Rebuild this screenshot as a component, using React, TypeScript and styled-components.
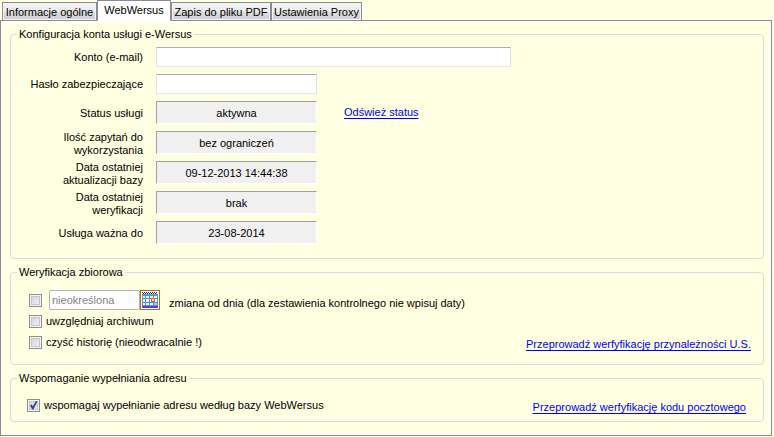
import React, { useState } from "react";
import styled, { createGlobalStyle } from "styled-components";

const GlobalStyle = createGlobalStyle`
  * { box-sizing: border-box; }
  body {
    margin: 0;
    background: #ffffe1;
    color: #000;
    font: 11px/13px "Liberation Sans", Arial, sans-serif;
  }
  button, input { font: inherit; }
`;

const Page = styled.main`
  padding-right: 2px;
`;

const TabBar = styled.div`
  display: flex;
  align-items: flex-end;
  height: 21px;
  padding-left: 2px;
`;

const Tab = styled.button<{ $active: boolean; $width: number }>`
  position: relative;
  z-index: ${(p) => (p.$active ? 1 : 0)};
  width: ${(p) => p.$width}px;
  height: ${(p) => (p.$active ? 21 : 19)}px;
  padding: ${(p) => (p.$active ? 0 : 2)}px 0 0;
  border: 1px solid #898c95;
  border-bottom-color: ${(p) => (p.$active ? "#fff" : "#898c95")};
  background: ${(p) =>
    p.$active ? "#fff" : "linear-gradient(#f3f3f3 0%, #ebebeb 50%, #dddddd 51%, #cfcfcf 100%)"};
  box-shadow: ${(p) => (p.$active ? "none" : "inset 0 0 0 1px #f4f4f4")};
  color: #000;
  white-space: nowrap;
`;

const Panel = styled.section`
  display: flex;
  flex-direction: column;
  gap: 7px;
  margin-top: -1px;
  padding: 7px 7px 13px 9px;
  border: 1px solid #898c95;
  box-shadow: inset 0 0 0 2px #fffff3;
`;

const Group = styled.fieldset<{ $compact?: boolean }>`
  min-width: 0;
  margin: 0;
  padding: 0 12px ${(p) => (p.$compact ? 7 : 12)}px 16px;
  border: 1px solid #d0dcea;
  border-radius: 4px;
`;

const Legend = styled.legend`
  margin-left: -10px;
  padding: 0 2px;
`;

const AccountGrid = styled.div`
  display: grid;
  grid-template-columns: 116px minmax(0, 1fr);
  grid-template-rows: 20px 20px;
  grid-auto-rows: 23px;
  gap: 7px 13px;
  align-items: center;
  padding: 6px 0 2px;
`;

const FieldLabel = styled.label`
  text-align: right;
`;

const ValueLabel = styled(FieldLabel)`
  padding-top: 2px;
`;

const FieldLine = styled.div`
  display: flex;
  align-items: center;
  gap: 27px;
`;

const TextInput = styled.input<{ $width: number }>`
  width: ${(p) => p.$width}px;
  height: 20px;
  padding: 0 4px;
  border: 1px solid;
  border-color: #abadb3 #dbdfe6 #e3e9ef #e2e3ea;
  border-radius: 1px;
  background: #fff;
  outline: none;
`;

const Value = styled.output`
  width: 161px;
  height: 23px;
  border: 1px solid;
  border-color: #a0a0a0 #fff #fff #a0a0a0;
  background: #f0f0f0;
  line-height: 22px;
  text-align: center;
`;

const Link = styled.a`
  color: #0000ff;
  text-decoration: underline;
  text-underline-offset: 2px;
  text-decoration-skip-ink: none;
  white-space: nowrap;
`;

const OptionList = styled.div`
  display: flex;
  flex-direction: column;
  gap: 1px;
  padding: 11px 0 0 2px;
`;

const OptionRow = styled.div`
  display: flex;
  align-items: center;
  min-height: 20px;
`;

const AddressRow = styled(OptionRow)`
  padding: 12px 5px 0 0;
`;

const TrailingLink = styled(Link)`
  margin-left: auto;
  padding-top: 4px;
`;

const CheckLabel = styled.label`
  padding-left: 4px;
`;

const DateLabel = styled.label`
  padding: 7px 0 0 9px;
`;

const CheckFrame = styled.span`
  display: grid;
  flex: none;
  width: 13px;
  height: 13px;
  & > * { grid-area: 1 / 1; }
`;

const CheckInput = styled.input`
  appearance: none;
  width: 13px;
  height: 13px;
  margin: 0;
  border: 1px solid #8e8f8f;
  background: linear-gradient(135deg, #cbcfd5, #f6f6f6);
  box-shadow: inset 0 0 0 1px #f4f4f4, inset 0 0 0 2px #c4c8ce;
`;

const Tick = styled.svg`
  width: 13px;
  height: 13px;
  pointer-events: none;
`;

const DateInput = styled(TextInput)`
  margin-left: 7px;
  padding: 0 2px;
  border-color: #b5b5b0;
  border-radius: 2px 0 0 2px;
  &::placeholder { color: #838383; opacity: 1; }
`;

const CalendarButton = styled.button`
  display: flex;
  align-items: center;
  justify-content: center;
  width: 20px;
  height: 20px;
  padding: 0;
  border: 1px solid #b56b08;
  background: #fff;
`;

function Checkbox({ id, initial = false }: { id: string; initial?: boolean }) {
  const [checked, setChecked] = useState(initial);
  return (
    <CheckFrame>
      <CheckInput id={id} type="checkbox" checked={checked} onChange={() => setChecked(!checked)} />
      {checked && (
        <Tick viewBox="0 0 13 13" aria-hidden="true">
          <path d="M3 6.2 L4.8 5.6 L5.8 7.6 L8.8 2.2 L10.6 2.2 L6.4 10.6 L5.2 10.6 Z" fill="#33428a" />
        </Tick>
      )}
    </CheckFrame>
  );
}

function CalendarIcon() {
  return (
    <svg width="16" height="16" viewBox="0 0 16 16" shapeRendering="crispEdges" aria-hidden="true">
      <path d="M0 1h16v14H0z" fill="#5c8fe0" />
      <path d="M0 0h16v2H0z" fill="#f2f2f6" />
      <path d="M0 0h1v1H0zM2 0h1v1H2zM4 0h1v1H4zM6 0h1v1H6zM8 0h1v1H8zM10 0h1v1h-1zM12 0h1v1h-1zM14 0h1v1h-1zM1 1h1v1H1zM3 1h1v1H3zM5 1h1v1H5zM7 1h1v1H7zM9 1h1v1H9zM11 1h1v1h-1zM13 1h1v1h-1z" fill="#303038" />
      <path d="M0 2h16v2H0z" fill="#4d9ae8" />
      <path
        d="M1 4h2v2H1zM4 4h3v2H4zM8 4h3v2H8zM12 4h3v2h-3zM1 7h2v3H1zM4 7h3v3H4zM8 7h3v3H8zM12 7h3v3h-3zM1 11h2v2H1zM4 11h3v2H4zM8 11h3v2H8z"
        fill="#eef5ff"
      />
      <path d="M9 6h4v4H9z" fill="#d86818" />
      <path d="M10 7h2v2h-2z" fill="#ffe3b0" />
      <path d="M12 11h3v2h-3z" fill="#a8c6f2" />
      <path d="M0 14h16v1H0z" fill="#3d52d8" />
      <path d="M0 15h16v1H0z" fill="#6b2be8" />
    </svg>
  );
}

const tabs = [
  { title: "Informacje ogólne", width: 95 },
  { title: "WebWersus", width: 74 },
  { title: "Zapis do pliku PDF", width: 100 },
  { title: "Ustawienia Proxy", width: 91 },
];

const results = [
  { id: "status", label: "Status usługi", value: "aktywna", link: "Odśwież status" },
  { id: "queries", label: "Ilość zapytań do wykorzystania", value: "bez ograniczeń" },
  { id: "updated", label: "Data ostatniej aktualizacji bazy", value: "09-12-2013 14:44:38" },
  { id: "verified", label: "Data ostatniej weryfikacji", value: "brak" },
  { id: "expires", label: "Usługa ważna do", value: "23-08-2014" },
];

export default function App() {
  const [active, setActive] = useState(1);
  return (
    <Page>
      <GlobalStyle />
      <TabBar role="tablist">
        {tabs.map((tab, i) => (
          <Tab
            key={tab.title}
            type="button"
            role="tab"
            aria-selected={i === active}
            $active={i === active}
            $width={tab.width}
            onClick={() => setActive(i)}
          >
            {tab.title}
          </Tab>
        ))}
      </TabBar>
      <Panel role="tabpanel">
        <Group>
          <Legend>Konfiguracja konta usługi e-Wersus</Legend>
          <AccountGrid>
            <FieldLabel htmlFor="account">Konto (e-mail)</FieldLabel>
            <TextInput id="account" type="email" $width={355} />
            <FieldLabel htmlFor="password">Hasło zabezpieczające</FieldLabel>
            <TextInput id="password" type="password" $width={161} />
            {results.map((row) => (
              <React.Fragment key={row.id}>
                <ValueLabel htmlFor={row.id}>{row.label}</ValueLabel>
                <FieldLine>
                  <Value id={row.id}>{row.value}</Value>
                  {row.link && <Link href="#status">{row.link}</Link>}
                </FieldLine>
              </React.Fragment>
            ))}
          </AccountGrid>
        </Group>
        <Group>
          <Legend>Weryfikacja zbiorowa</Legend>
          <OptionList>
            <OptionRow>
              <Checkbox id="since" />
              <DateInput id="date" type="text" placeholder="nieokreślona" aria-label="Data" $width={91} />
              <CalendarButton type="button" aria-label="Kalendarz">
                <CalendarIcon />
              </CalendarButton>
              <DateLabel htmlFor="since">zmiana od dnia (dla zestawienia kontrolnego nie wpisuj daty)</DateLabel>
            </OptionRow>
            <OptionRow>
              <Checkbox id="archive" />
              <CheckLabel htmlFor="archive">uwzględniaj archiwum</CheckLabel>
            </OptionRow>
            <OptionRow>
              <Checkbox id="history" />
              <CheckLabel htmlFor="history">czyść historię (nieodwracalnie !)</CheckLabel>
              <TrailingLink href="#us">Przeprowadź werfyfikację przynależności U.S.</TrailingLink>
            </OptionRow>
          </OptionList>
        </Group>
        <Group $compact>
          <Legend>Wspomaganie wypełniania adresu</Legend>
          <AddressRow>
            <Checkbox id="assist" initial />
            <CheckLabel htmlFor="assist">wspomagaj wypełnianie adresu według bazy WebWersus</CheckLabel>
            <TrailingLink href="#postcode">Przeprowadź werfyfikację kodu pocztowego</TrailingLink>
          </AddressRow>
        </Group>
      </Panel>
    </Page>
  );
}
